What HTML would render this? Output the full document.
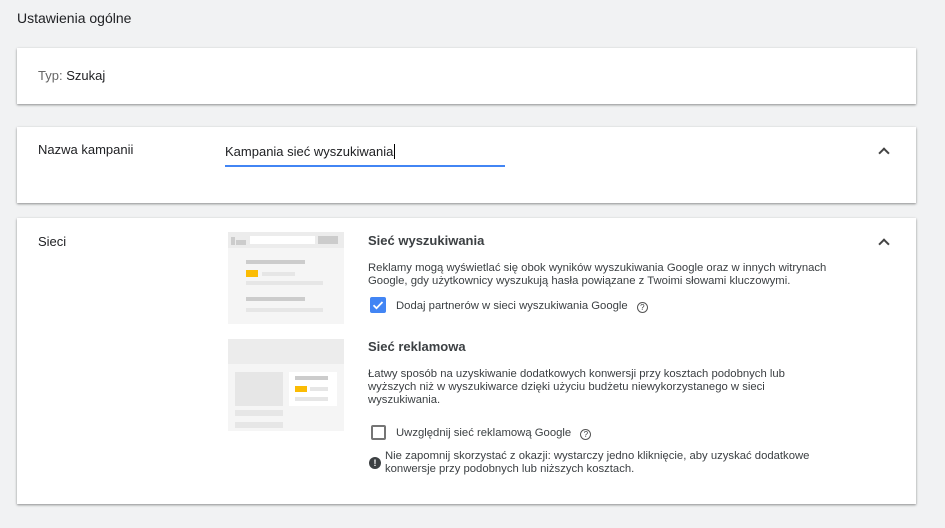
<!DOCTYPE html>
<html><head><meta charset="utf-8"><style>
*{box-sizing:border-box;margin:0;padding:0}
body{width:945px;height:528px;background:#f1f2f3;font-family:"Liberation Sans",Arial,sans-serif;color:#202124;position:relative;overflow:hidden}
.card{position:absolute;left:17px;width:899px;background:#fff;box-shadow:0 1px 2px rgba(0,0,0,.3),0 1px 3px rgba(0,0,0,.15)}
.abs{position:absolute}
.g{background:#f5f5f5}
.chev{position:absolute;width:8px;height:8px;border-left:2px solid #444;border-top:2px solid #444;transform:rotate(45deg)}
.t{font-size:11.3px;line-height:13px;color:#3c4043}
</style></head><body>
<div class="abs" style="left:17px;top:10px;font-size:14px">Ustawienia ogólne</div>
<div class="card" style="top:48px;height:56px">
 <div class="abs" style="left:21px;top:20px;font-size:13px"><span style="color:#666">Typ:</span> Szukaj</div>
</div>
<div class="card" style="top:127px;height:76px">
 <div class="abs" style="left:21px;top:15px;font-size:13px">Nazwa kampanii</div>
 <div class="abs" style="left:208px;top:17px;font-size:13px">Kampania sieć wyszukiwania<span style="border-left:1px solid #000;margin-left:1px"></span></div>
 <div class="abs" style="left:208px;top:38px;width:280px;height:2px;background:#4285f4"></div>
 <div class="chev" style="left:863px;top:22px"></div>
</div>
<div class="card" style="top:218px;height:286px">
 <div class="abs" style="left:21px;top:16px;font-size:13px">Sieci</div>
 <div class="chev" style="left:863px;top:22px"></div>
 <div class="abs g" style="left:211px;top:14px;width:116px;height:92px"></div>
 <div class="abs" style="left:211px;top:14px;width:116px;height:16px;background:#ececec"></div>
 <div class="abs" style="left:214px;top:19px;width:4px;height:8px;background:#ccc"></div>
 <div class="abs" style="left:219px;top:22px;width:10px;height:5px;background:#ccc"></div>
 <div class="abs" style="left:233px;top:18px;width:65px;height:8px;background:#fff"></div>
 <div class="abs" style="left:301px;top:18px;width:20px;height:8px;background:#ccc"></div>
 <div class="abs" style="left:229px;top:42px;width:59px;height:4px;background:#ccc"></div>
 <div class="abs" style="left:229px;top:52px;width:12px;height:7px;background:#fbbc04"></div>
 <div class="abs" style="left:245px;top:54px;width:33px;height:4px;background:#e6e6e6"></div>
 <div class="abs" style="left:229px;top:63px;width:77px;height:4px;background:#e6e6e6"></div>
 <div class="abs" style="left:229px;top:79px;width:59px;height:4px;background:#ccc"></div>
 <div class="abs" style="left:229px;top:90px;width:77px;height:4px;background:#e6e6e6"></div>
 <div class="abs g" style="left:211px;top:121px;width:116px;height:92px"></div>
 <div class="abs" style="left:211px;top:121px;width:116px;height:25px;background:#ececec"></div>
 <div class="abs" style="left:218px;top:154px;width:48px;height:34px;background:#e6e6e6"></div>
 <div class="abs" style="left:218px;top:192px;width:48px;height:6px;background:#e6e6e6"></div>
 <div class="abs" style="left:218px;top:204px;width:48px;height:6px;background:#e6e6e6"></div>
 <div class="abs" style="left:272px;top:154px;width:48px;height:34px;background:#fff"></div>
 <div class="abs" style="left:278px;top:158px;width:33px;height:4px;background:#ccc"></div>
 <div class="abs" style="left:278px;top:168px;width:12px;height:6px;background:#fbbc04"></div>
 <div class="abs" style="left:293px;top:169px;width:18px;height:4px;background:#e6e6e6"></div>
 <div class="abs" style="left:278px;top:179px;width:33px;height:4px;background:#e6e6e6"></div>
 <div class="abs" style="left:351px;top:15px;font-size:13px;font-weight:bold;color:#3c4043">Sieć wyszukiwania</div>
 <div class="abs t" style="left:351px;top:44px;width:490px">Reklamy mogą wyświetlać się obok wyników wyszukiwania Google oraz w innych witrynach Google, gdy użytkownicy wyszukują hasła powiązane z Twoimi słowami kluczowymi.</div>
 <div class="abs" style="left:353px;top:79px;width:16px;height:16px;background:#4285f4;border-radius:2px"><svg width="16" height="16" viewBox="0 0 16 16"><path d="M3.5 8.2l3 3 6-6.2" stroke="#fff" stroke-width="1.8" fill="none"/></svg></div>
 <div class="abs t" style="left:379px;top:82px">Dodaj partnerów w sieci wyszukiwania Google <span style="display:inline-block;width:11px;height:11px;border:1px solid #555;border-radius:50%;font-size:8px;text-align:center;line-height:9px;margin-left:6px;vertical-align:-1px">?</span></div>
 <div class="abs" style="left:351px;top:121px;font-size:13px;font-weight:bold;color:#3c4043">Sieć reklamowa</div>
 <div class="abs t" style="left:351px;top:150px;width:455px">Łatwy sposób na uzyskiwanie dodatkowych konwersji przy kosztach podobnych lub wyższych niż w wyszukiwarce dzięki użyciu budżetu niewykorzystanego w sieci wyszukiwania.</div>
 <div class="abs" style="left:354px;top:207px;width:15px;height:15px;border:2px solid #757575;border-radius:2px"></div>
 <div class="abs t" style="left:379px;top:209px">Uwzględnij sieć reklamową Google <span style="display:inline-block;width:11px;height:11px;border:1px solid #555;border-radius:50%;font-size:8px;text-align:center;line-height:9px;margin-left:6px;vertical-align:-1px">?</span></div>
 <div class="abs" style="left:352px;top:239px;width:12px;height:12px;border-radius:50%;background:#3c4043;color:#fff;font-size:9px;font-weight:bold;text-align:center;line-height:12px">!</div>
 <div class="abs t" style="left:368px;top:232px;width:470px">Nie zapomnij skorzystać z okazji: wystarczy jedno kliknięcie, aby uzyskać dodatkowe konwersje przy podobnych lub niższych kosztach.</div>
</div>
</body></html>
